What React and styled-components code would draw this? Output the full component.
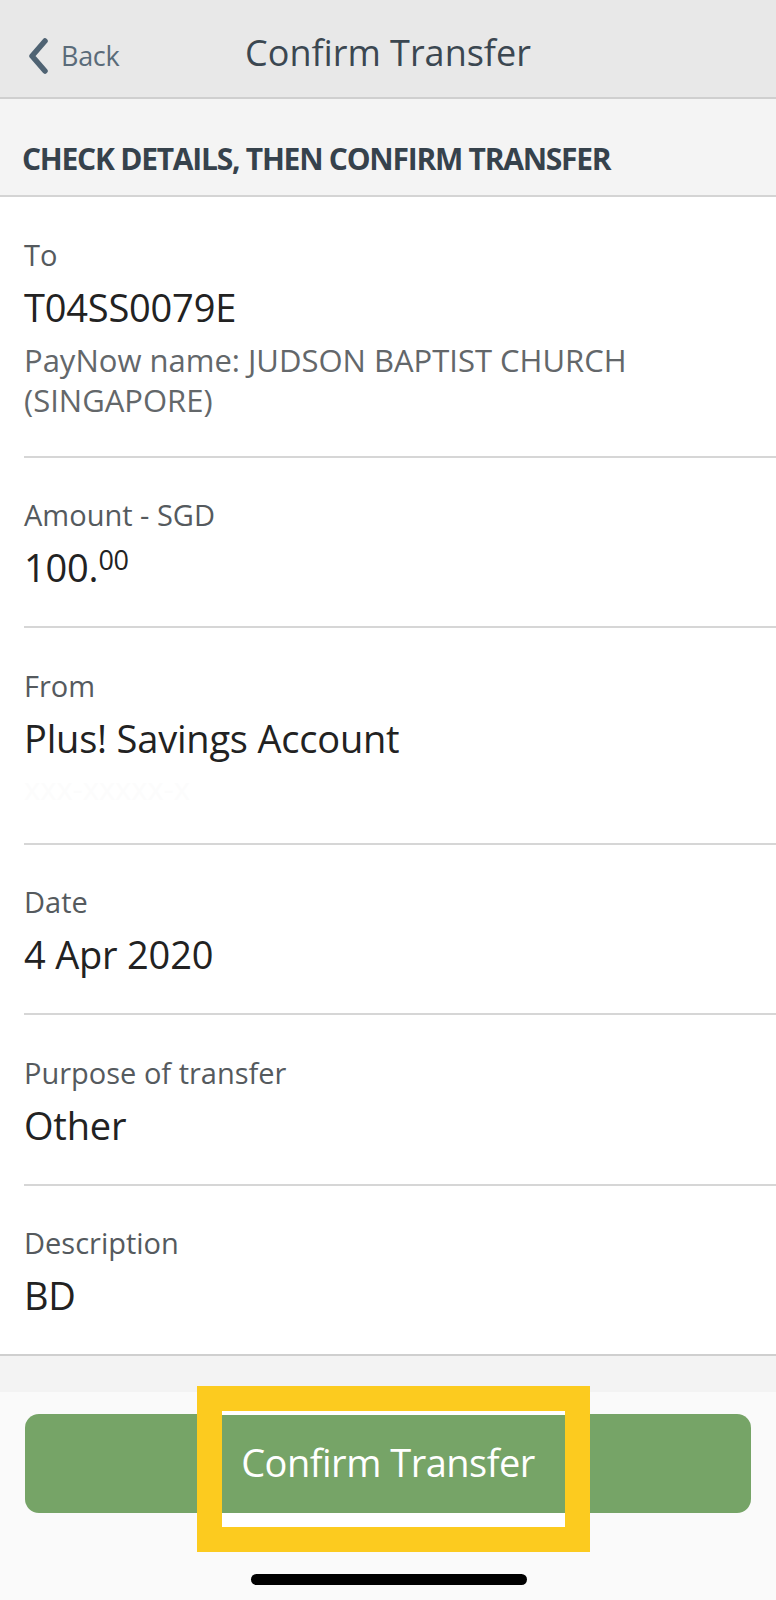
import React from "react";
import styled, { createGlobalStyle } from "styled-components";

const Global = createGlobalStyle`
  html, body { margin: 0; padding: 0; background: #fafafa; }
  body { font-family: "Open Sans", "Noto Sans", sans-serif; -webkit-font-smoothing: antialiased; }
  * { box-sizing: border-box; }
`;

const Page = styled.div`
  position: relative;
  width: 776px;
  height: 1600px;
  overflow: hidden;
  background: #fafafa;
  display: flex;
  flex-direction: column;
`;

const NavBar = styled.header`
  position: relative;
  height: 99px;
  flex: none;
  background: #e8e8e8;
  border-bottom: 2px solid #cfcfcf;
  display: flex;
  align-items: center;
  justify-content: center;
  padding-top: 8px;
`;

const BackButton = styled.div`
  position: absolute;
  left: 27px;
  top: 0;
  bottom: 0;
  padding-top: 14px;
  display: flex;
  align-items: center;
  gap: 12px;
  color: #5a6b79;
  font-size: 27px;
  letter-spacing: -0.3px;
`;

const Title = styled.h1`
  margin: 0;
  font-weight: 400;
  font-size: 36px;
  color: #3b4751;
  letter-spacing: 0;
`;

const SectionHead = styled.div`
  height: 98px;
  flex: none;
  background: #f4f4f4;
  border-bottom: 2px solid #d4d4d4;
  padding: 40px 22px 0;
  font-weight: 700;
  font-size: 30px;
  line-height: 40px;
  letter-spacing: -1.25px;
  color: #36424c;
  white-space: nowrap;
`;

const List = styled.section`
  background: #fff;
  border-bottom: 2px solid #cfcfcf;
  flex: none;
`;

const Row = styled.div`
  margin-left: 24px;
  padding: 39.5px 0 36px;
  border-bottom: ${(p) => (p.$last ? "none" : "2px solid #d6d6d6")};
`;

const Label = styled.div`
  font-size: 29px;
  line-height: 36px;
  color: #555a5e;
`;

const Value = styled.div`
  margin-top: 11px;
  font-size: 38px;
  line-height: 46px;
  color: #222;
  letter-spacing: -0.2px;
`;

const Cents = styled.span`
  font-size: 27px;
  line-height: 0;
  vertical-align: 0.45em;
`;

const Sub = styled.div`
  margin-top: ${(p) => (p.$faint ? "8px" : "10px")};
  font-size: 31px;
  line-height: ${(p) => (p.$faint ? "38px" : "40px")};
  color: ${(p) => (p.$faint ? "#fcfcfc" : "#63676a")};
  padding-right: 40px;
`;

const Footer = styled.div`
  position: relative;
  flex: 1;
  background: linear-gradient(#f3f3f3 0 36px, #fafafa 36px);
  padding: 58px 25px 0;
  display: flex;
  flex-direction: column;
  align-items: stretch;
`;

const ConfirmButton = styled.button`
  height: 99px;
  border: none;
  border-radius: 14px;
  background: #76a467;
  color: #fff;
  font-family: "Open Sans", "Noto Sans", sans-serif;
  font-size: 38px;
  letter-spacing: -0.5px;
  padding-bottom: 4px;
`;

const Highlight = styled.div`
  position: absolute;
  left: 197px;
  top: 30px;
  width: 393px;
  height: 166px;
  border: 25px solid #fccb1f;
  background: linear-gradient(
    to bottom,
    #fff 0 4px,
    transparent 4px calc(100% - 14px),
    #fff calc(100% - 14px)
  );
  pointer-events: none;
`;

const HomeBar = styled.div`
  position: absolute;
  left: 251px;
  bottom: 15px;
  width: 276px;
  height: 11px;
  border-radius: 6px;
  background: #000;
`;

const Chevron = () => (
  <svg width="22" height="36" viewBox="0 0 22 36">
    <path d="M18 3 L5 18 L18 33" fill="none" stroke="#4f6373" strokeWidth="5.5" strokeLinecap="round" strokeLinejoin="round" />
  </svg>
);

export default function App() {
  return (
    <>
      <Global />
      <Page>
        <NavBar>
          <BackButton>
            <Chevron />
            <span>Back</span>
          </BackButton>
          <Title>Confirm Transfer</Title>
        </NavBar>
        <SectionHead>CHECK DETAILS, THEN CONFIRM TRANSFER</SectionHead>
        <List>
          <Row>
            <Label>To</Label>
            <Value>T04SS0079E</Value>
            <Sub>PayNow name: JUDSON BAPTIST CHURCH (SINGAPORE)</Sub>
          </Row>
          <Row>
            <Label>Amount - SGD</Label>
            <Value>
              100.<Cents>00</Cents>
            </Value>
          </Row>
          <Row>
            <Label>From</Label>
            <Value>Plus! Savings Account</Value>
            <Sub $faint>xxx-xxxxx-x</Sub>
          </Row>
          <Row>
            <Label>Date</Label>
            <Value>4 Apr 2020</Value>
          </Row>
          <Row>
            <Label>Purpose of transfer</Label>
            <Value>Other</Value>
          </Row>
          <Row $last>
            <Label>Description</Label>
            <Value>BD</Value>
          </Row>
        </List>
        <Footer>
          <ConfirmButton>Confirm Transfer</ConfirmButton>
          <Highlight />
          <HomeBar />
        </Footer>
      </Page>
    </>
  );
}
